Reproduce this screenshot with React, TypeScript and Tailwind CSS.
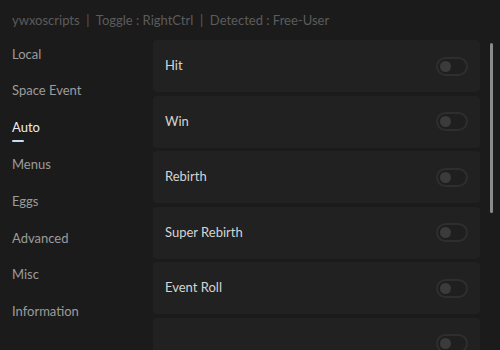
const tabs = ["Local", "Space Event", "Auto", "Menus", "Eggs", "Advanced", "Misc", "Information"];
const options = ["Hit", "Win", "Rebirth", "Super Rebirth", "Event Roll", ""];

function Toggle() {
  return (
    <div className="w-[32px] h-[19px] rounded-full border-2 border-[#2e2e2e] bg-[#1f1f1f] flex items-center pl-[2px]">
      <div className="w-[11px] h-[11px] rounded-full bg-[#3b3b3b]" />
    </div>
  );
}

export default function App() {
  return (
    <div
      className="w-[500px] h-[350px] overflow-hidden bg-[#1b1b1b] flex flex-col"
      style={{ fontFamily: "Lato, 'Open Sans', sans-serif" }}
    >
      <div className="h-[40px] shrink-0 flex items-center pl-[12px] pt-[1px] text-[13px] text-[#5b5b5b] whitespace-nowrap">
        ywxoscripts&nbsp;&nbsp;|&nbsp;&nbsp;Toggle : RightCtrl&nbsp;&nbsp;|&nbsp;&nbsp;Detected : Free-User
      </div>
      <div className="flex flex-1 min-h-0">
        <div className="w-[153px] shrink-0 flex flex-col pl-[12px] mt-[-4px]">
          {tabs.map((t) => (
            <div key={t} className="h-[36.8px] shrink-0 flex flex-col justify-center relative">
              <span className={`text-[13px] ${t === "Auto" ? "text-[#ececec]" : "text-[#9b9b9b]"}`}>{t}</span>
              {t === "Auto" && <div className="absolute left-0 top-[30px] w-[12px] h-[2px] bg-[#bfe0f2] rounded" />}
            </div>
          ))}
        </div>
        <div className="w-[327px] shrink-0 flex flex-col gap-[3.5px]">
          {options.map((o, i) => (
            <div
              key={i}
              className="h-[52px] shrink-0 rounded-[4px] bg-[#212121] flex items-center justify-between pl-[12px] pr-[12px]"
            >
              <span className="text-[13px] text-[#d4d4d4]">{o}</span>
              <Toggle />
            </div>
          ))}
        </div>
        <div className="flex-1 flex justify-center pt-[3px] pl-[3px]">
          <div className="w-[3px] h-[170px] rounded-full bg-[#8a8a8a]" />
        </div>
      </div>
    </div>
  );
}
